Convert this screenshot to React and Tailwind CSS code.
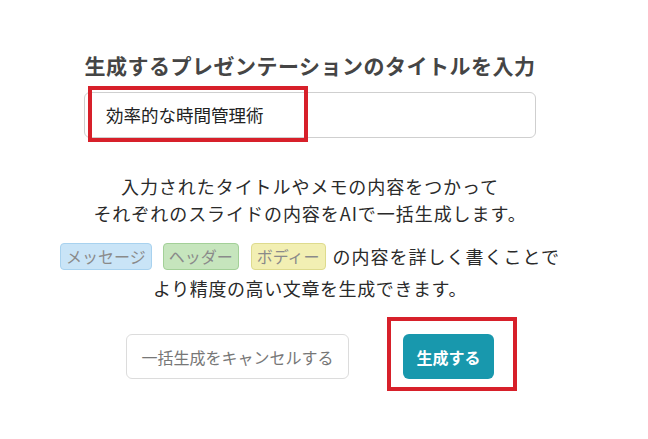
const jp = "font-['Noto_Sans_CJK_JP','Noto_Sans',sans-serif]";

const Tag = ({ label, tone }) => {
  const tones = {
    blue: "bg-[#c9e4f7] border-[#a8d2ef]",
    green: "bg-[#c6e5bd] border-[#a3d098]",
    yellow: "bg-[#f2efb3] border-[#dedb8e]",
  };
  return (
    <span
      className={`inline-block rounded-[4px] border px-[5px] text-[16px] leading-[25px] tracking-normal text-[#8a8a8a] ${tones[tone]}`}
    >
      {label}
    </span>
  );
};

export default function App() {
  return (
    <div className={`${jp} w-[648px] h-[439px] bg-white`}>
      <div className="w-[620px] flex flex-col items-center pt-[52px]">
        <h2 className="text-[21px] font-bold leading-[26px] text-[#454545] tracking-[0.5px]">
          生成するプレゼンテーションのタイトルを入力
        </h2>

        <div className="relative mt-[14px] w-[452px] h-[46px] rounded-[6px] border border-[#cfcfcf] flex items-center pl-[21px]">
          <span className="text-[17.5px] text-[#222] tracking-normal">効率的な時間管理術</span>
          <div className="absolute left-[3px] top-[-7px] w-[220px] h-[56px] border-4 border-[#d7202a]" />
        </div>

        <p className="mt-[35px] text-center text-[18px] leading-[27px] text-[#2a2a2a] tracking-[0.95px]">
          入力されたタイトルやメモの内容をつかって
          <br />
          それぞれのスライドの内容をAIで一括生成します。
        </p>

        <div className="mt-[13px] flex items-center h-[32px] text-[18px] text-[#2a2a2a] tracking-[1px]">
          <Tag label="メッセージ" tone="blue" />
          <span className="ml-[11px]">
            <Tag label="ヘッダー" tone="green" />
          </span>
          <span className="ml-[12px]">
            <Tag label="ボディー" tone="yellow" />
          </span>
          <span className="ml-[7px]">の内容を詳しく書くことで</span>
        </div>
        <p className="text-[18px] leading-[32px] text-[#2a2a2a] tracking-[0.6px]">
          より精度の高い文章を生成できます。
        </p>

        <div className="mt-[30px] flex items-center gap-[54px]">
          <button className="w-[223px] h-[45px] rounded-[6px] border border-[#dcdcdc] bg-white text-[16px] text-[#777]">
            一括生成をキャンセルする
          </button>
          <div className="relative">
            <button className="w-[91px] h-[45px] rounded-[6px] bg-[#1898ad] text-[16px] font-bold text-white">
              生成する
            </button>
            <div className="absolute left-[-16px] top-[-17px] w-[130px] h-[74px] border-4 border-[#d7202a]" />
          </div>
        </div>
      </div>
    </div>
  );
}
